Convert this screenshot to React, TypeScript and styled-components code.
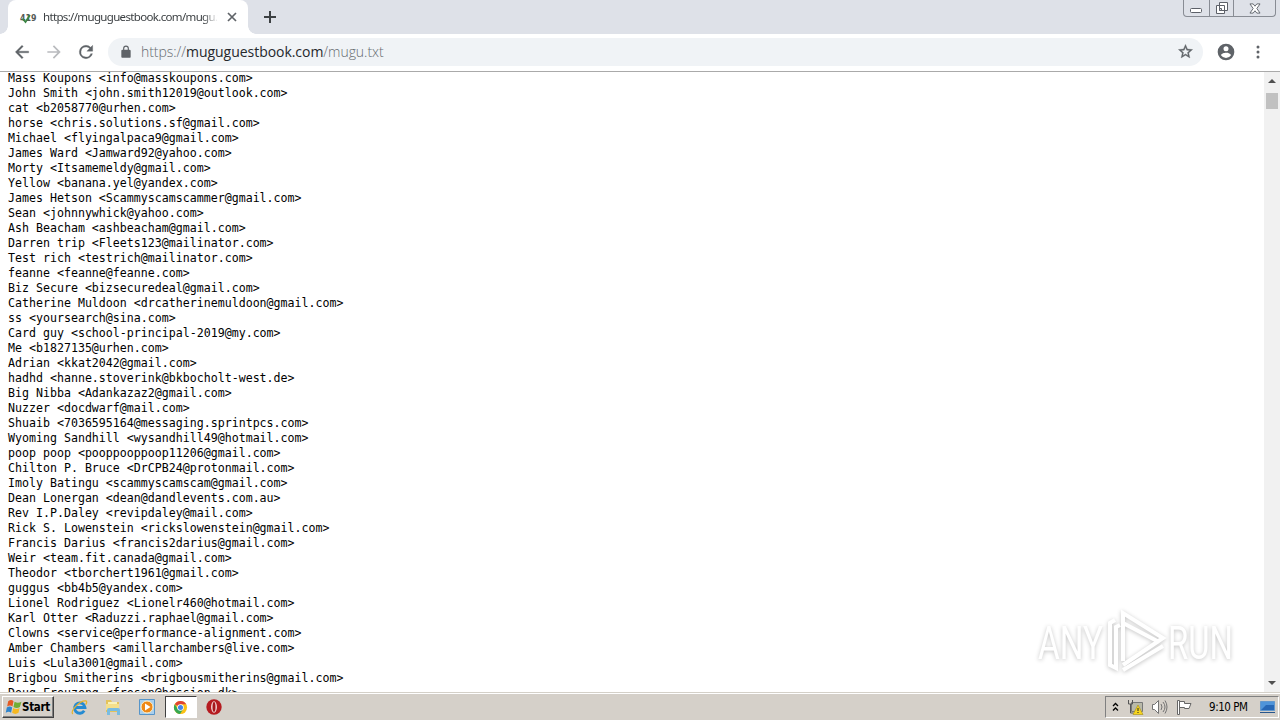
import React from "react";
import styled, { createGlobalStyle } from "styled-components";

const Global = createGlobalStyle`
  * { box-sizing: border-box; }
  html, body { margin: 0; padding: 0; overflow: hidden; background: #fff; }
  svg { display: block; flex: none; overflow: visible; }
`;

const Screen = styled.div`
  position: relative;
  display: flex;
  flex-direction: column;
  width: 1280px;
  height: 720px;
  overflow: hidden;
  background: #fff;
`;

const TabStrip = styled.header`
  display: flex;
  align-items: flex-start;
  height: 34px;
  flex: none;
  background: #dee1e8;
`;

const TabWrap = styled.div`
  display: flex;
  align-items: flex-end;
  height: 34px;
`;

const Tab = styled.div`
  display: flex;
  align-items: center;
  width: 240px;
  height: 34px;
  padding: 0 11px 0 12px;
  border-radius: 8px 8px 0 0;
  background: #fff;
`;

const Flare = styled.div<{ $side: "left" | "right" }>`
  width: 8px;
  height: 8px;
  background: radial-gradient(circle at ${(p) => (p.$side === "left" ? "0 0" : "100% 0")}, #dee1e8 7.5px, #fff 8px);
`;

const TabTitle = styled.span`
  width: 175px;
  margin: 0 auto 0 6px;
  overflow: hidden;
  white-space: nowrap;
  font: 11.5px/16px "Noto Sans", sans-serif;
  letter-spacing: -0.66px;
  color: #3c4043;
  mask-image: linear-gradient(90deg, #000 160px, transparent 175px);
`;

const NewTab = styled.div`
  padding: 11px 0 0 8px;
`;

const WindowButtons = styled.div`
  display: flex;
  width: 93px;
  height: 17px;
  margin: 0 4px 0 auto;
  border: 1px solid #888c94;
  border-top: 0;
  border-radius: 0 0 4px 4px;
`;

const WindowButton = styled.div<{ $w: number }>`
  display: flex;
  align-items: center;
  justify-content: center;
  width: ${(p) => p.$w}px;
  & + & { border-left: 1px solid #888c94; }
`;

const Toolbar = styled.div`
  display: flex;
  align-items: center;
  height: 38px;
  flex: none;
  padding: 0 12px 2px 12px;
  border-bottom: 1px solid #aaaaaa;
  background: #fff;
`;

const NavIcons = styled.div`
  display: flex;
  gap: 12px;
  margin-right: 12px;
`;

const Omnibox = styled.div`
  display: flex;
  align-items: center;
  width: 1095px;
  flex: none;
  height: 28px;
  padding: 0 9px 0 11px;
  border-radius: 14px;
  background: #f0f3f6;
`;

const Address = styled.div`
  flex: 1;
  margin-left: 8px;
  font: 300 14px/20px "Open Sans", "Noto Sans", sans-serif;
  letter-spacing: -0.04px;
  white-space: nowrap;
  color: #666b70;
  b { font-weight: 400; color: #25282c; }
`;

const ToolbarEnd = styled.div`
  display: flex;
  align-items: center;
  gap: 13px;
  margin-left: 13px;
`;

const Page = styled.main`
  display: flex;
  height: 620px;
  flex: none;
  overflow: hidden;
`;

const Listing = styled.pre`
  flex: 1;
  margin: -1px 0 0;
  padding-left: 8px;
  font: 11.61px/15px "DejaVu Sans Mono", monospace;
  color: #000;
`;

const Scrollbar = styled.div`
  display: flex;
  flex-direction: column;
  align-items: center;
  justify-content: space-between;
  width: 16px;
  padding: 7px 0 7px;
  background: #f1f1f1;
`;

const Thumb = styled.div`
  width: 12px;
  height: 16px;
  margin: 10px 0 auto;
  background: #c1c1c1;
`;

const Arrow = styled.div<{ $up?: boolean }>`
  border: 4px solid transparent;
  border-${(p) => (p.$up ? "top" : "bottom")}: 0;
  border-${(p) => (p.$up ? "bottom" : "top")}: 4px solid #505050;
`;

const Taskbar = styled.footer`
  display: flex;
  align-items: center;
  height: 28px;
  flex: none;
  padding: 2px 1px 1px 2px;
  border-top: 1px solid #d4d0c8;
  box-shadow: inset 0 1px #fff;
  background: #d5d0c9;
`;

const StartButton = styled.div`
  display: flex;
  align-items: center;
  gap: 0;
  width: 52px;
  height: 22px;
  padding-left: 2px;
  border: 1px solid;
  border-color: #fff #404040 #404040 #fff;
  box-shadow: inset -1px -1px #808080;
  font: bold 11.5px/16px "DejaVu Sans Condensed", "DejaVu Sans", sans-serif;
  letter-spacing: -0.3px;
  color: #000;
`;

const Launchers = styled.div`
  display: flex;
  margin-left: 9px;
`;

const Launcher = styled.div<{ $active?: boolean }>`
  display: flex;
  align-items: center;
  justify-content: center;
  width: ${(p) => (p.$active ? 32 : 33.5)}px;
  height: 22px;
  ${(p) => p.$active && "margin: 0 1px; background: #fff; border: 1px solid; border-color: #404040 #fff #fff #404040;"}
`;

const Tray = styled.div`
  display: flex;
  align-items: center;
  width: 174px;
  height: 22px;
  margin-left: auto;
  padding-left: 6px;
  border: 1px solid;
  border-color: #808080 #fff #fff #808080;
`;

const TrayIcons = styled.div`
  display: flex;
  align-items: center;
  gap: 8px;
`;

const Clock = styled.span`
  width: 42px;
  margin: 0 9px 0 17px;
  font: 11.5px/14px "DejaVu Sans Condensed", "DejaVu Sans", sans-serif;
  letter-spacing: -0.45px;
  white-space: nowrap;
  color: #000;
`;

const Watermark = styled.div`
  position: absolute;
  left: 1037px;
  top: 605px;
  filter: drop-shadow(0 1px 2px rgba(0, 0, 0, 0.24));
`;

const entries = `Mass Koupons <info@masskoupons.com>
John Smith <john.smith12019@outlook.com>
cat <b2058770@urhen.com>
horse <chris.solutions.sf@gmail.com>
Michael <flyingalpaca9@gmail.com>
James Ward <Jamward92@yahoo.com>
Morty <Itsamemeldy@gmail.com>
Yellow <banana.yel@yandex.com>
James Hetson <Scammyscamscammer@gmail.com>
Sean <johnnywhick@yahoo.com>
Ash Beacham <ashbeacham@gmail.com>
Darren trip <Fleets123@mailinator.com>
Test rich <testrich@mailinator.com>
feanne <feanne@feanne.com>
Biz Secure <bizsecuredeal@gmail.com>
Catherine Muldoon <drcatherinemuldoon@gmail.com>
ss <yoursearch@sina.com>
Card guy <school-principal-2019@my.com>
Me <b1827135@urhen.com>
Adrian <kkat2042@gmail.com>
hadhd <hanne.stoverink@bkbocholt-west.de>
Big Nibba <Adankazaz2@gmail.com>
Nuzzer <docdwarf@mail.com>
Shuaib <7036595164@messaging.sprintpcs.com>
Wyoming Sandhill <wysandhill49@hotmail.com>
poop poop <pooppooppoop11206@gmail.com>
Chilton P. Bruce <DrCPB24@protonmail.com>
Imoly Batingu <scammyscamscam@gmail.com>
Dean Lonergan <dean@dandlevents.com.au>
Rev I.P.Daley <revipdaley@mail.com>
Rick S. Lowenstein <rickslowenstein@gmail.com>
Francis Darius <francis2darius@gmail.com>
Weir <team.fit.canada@gmail.com>
Theodor <tborchert1961@gmail.com>
guggus <bb4b5@yandex.com>
Lionel Rodriguez <Lionelr460@hotmail.com>
Karl Otter <Raduzzi.raphael@gmail.com>
Clowns <service@performance-alignment.com>
Amber Chambers <amillarchambers@live.com>
Luis <Lula3001@gmail.com>
Brigbou Smitherins <brigbousmitherins@gmail.com>
Doug Freuzeng <freson@hession.dk>`;

const Glyph = ({ d, size = 20, fill = "#5f6368", bold = 0 }: { d: string; size?: number; fill?: string; bold?: number }) => (
  <svg width={size} height={size} viewBox="0 0 24 24"><path d={d} fill={fill} stroke={fill} strokeWidth={bold} /></svg>
);

const BACK = "M20 11H7.83l5.59-5.59L12 4l-8 8 8 8 1.41-1.41L7.83 13H20v-2z";
const FORWARD = "M12 4l-1.41 1.41L16.17 11H4v2h12.17l-5.58 5.59L12 20l8-8z";
const RELOAD = "M17.65 6.35A7.96 7.96 0 0 0 12 4a8 8 0 1 0 7.73 10h-2.08A6 6 0 1 1 12 6c1.66 0 3.14.69 4.22 1.78L13 11h7V4l-2.35 2.35z";
const LOCK = "M18 8h-1V6A5 5 0 0 0 7 6v2H6a2 2 0 0 0-2 2v10c0 1.1.9 2 2 2h12a2 2 0 0 0 2-2V10a2 2 0 0 0-2-2zM9 6a3 3 0 0 1 6 0v2H9V6z";
const STAR = "M22 9.24l-7.19-.62L12 2 9.19 8.63 2 9.24l5.46 4.73L5.82 21 12 17.27 18.18 21l-1.63-7.03L22 9.24zM12 15.4l-3.76 2.27 1-4.28-3.32-2.88 4.38-.38L12 6.1l1.71 4.04 4.38.38-3.32 2.88 1 4.28L12 15.4z";
const PERSON = "M12 2a10 10 0 1 0 0 20 10 10 0 0 0 0-20zm0 3a3 3 0 1 1 0 6 3 3 0 0 1 0-6zm0 14.2a7.2 7.2 0 0 1-6-3.22c.03-1.99 4-3.08 6-3.08s5.97 1.09 6 3.08a7.2 7.2 0 0 1-6 3.22z";

const FavIcon = () => (
  <svg width="17" height="16" viewBox="0 0 17 16">
    <text x="0" y="11.5" fontFamily="DejaVu Sans, sans-serif" fontWeight="bold" fontSize="9.5" textLength="16.5" lengthAdjust="spacingAndGlyphs" fill="#555a56">419</text>
    <path d="M2.500 9.500l3 3.500 4.500-7" fill="none" stroke="#3b8544" strokeWidth="1.800" />
  </svg>
);

const StartFlag = () => (
  <svg width="17" height="17" viewBox="0 0 16 16">
    <path d="M3 2q3-2 5 0L7 7Q5 5 2 7z" fill="#e35a24" />
    <path d="M9 2.500q3 2 6.500 0l-1.500 5q-3 2-6 0z" fill="#71ae35" />
    <path d="M1.700 8q3-2 5 0l-1 5q-2-2-5 0z" fill="#2e84cd" />
    <path d="M7.700 8.500q3 2 6 0l-1 4.500q-3 2-6 0z" fill="#f6b821" />
  </svg>
);

const Explorer = () => (
  <svg width="17" height="17" viewBox="0 0 18 18">
    <path d="M14 12.500A5.500 5.500 0 1 1 14.800 9H4.500" fill="none" stroke="#258bd2" strokeWidth="3" />
    <path d="M2 16C-2 13 10 1 16 2q1.500 1-.5 4" fill="none" stroke="#e6b32c" strokeWidth="1.300" />
  </svg>
);

const Folder = () => (
  <svg width="18" height="18" viewBox="0 0 18 18">
    <path d="M2 2h5l1 2h7v10H2z" fill="#e4c35b" />
    <path d="M4 4h9v3H4z" fill="#f9f2b9" />
    <path d="M2 6h13v6H2z" fill="#f4df8b" />
    <path d="M3 17v-5q0-2 2-2h9q2 0 2 2v5h-3v-4H6v4z" fill="#79bce1" />
  </svg>
);

const MediaPlayer = () => (
  <svg width="16" height="16" viewBox="0 0 16 16">
    <path d="M.5.5h15v15H.5z" fill="#a9cfed" stroke="#5795c9" />
    <circle cx="8" cy="8" r="6" fill="#ee8918" stroke="#fff0ca" />
    <path d="M6 4.500v7L11.500 8z" fill="#fff" />
  </svg>
);

const Chrome = () => (
  <svg width="15" height="15" viewBox="0 0 16 16">
    <circle cx="8" cy="8" r="7" fill="#fbc116" />
    <path d="M8 8L1.900 4.500A7 7 0 0 1 14.100 4.500H8z" fill="#df4334" />
    <path d="M1.900 4.500A7 7 0 0 0 7.500 15l3.500-5.500H5z" fill="#35a853" />
    <circle cx="8" cy="8" r="3.500" fill="#fff" /><circle cx="8" cy="8" r="2.700" fill="#4285e8" />
  </svg>
);

const Opera = () => (
  <svg width="16" height="16" viewBox="0 0 16 16">
    <circle cx="8" cy="8" r="7.700" fill="#b51b20" />
    <ellipse cx="8" cy="8" rx="2.900" ry="5.800" fill="#f6dede" />
    <ellipse cx="8" cy="8" rx="1.500" ry="4.900" fill="#a5161b" />
  </svg>
);

const AnyRunMark = () => (
  <svg width="202" height="70" viewBox="0 0 202 70">
    <g fill="#fff" fontFamily="Roboto, sans-serif" fontSize="46">
      <text x="1" y="54" textLength="65" lengthAdjust="spacingAndGlyphs">ANY</text>
      <text x="131" y="54" textLength="65" lengthAdjust="spacingAndGlyphs">RUN</text>
    </g>
    <g fill="none" stroke="#fff" strokeWidth="4">
      <path d="M86 56V8l40 25-40 27" />
      <path d="M78 15l-5 3v42l6 3V22l4-2M86 18l36 19M86 65l40-24" />
    </g>
  </svg>
);

export default function App() {
  return (
    <Screen>
      <Global />
      <TabStrip>
        <TabWrap>
          <Flare $side="left" />
          <Tab>
            <FavIcon />
            <TabTitle>https://muguguestbook.com/mugu.txt</TabTitle>
            <svg width="10" height="10" viewBox="0 0 10 10"><path d="M1 1l8 8M9 1l-8 8" stroke="#5f6368" strokeWidth="1.700" /></svg>
          </Tab>
          <Flare $side="right" />
        </TabWrap>
        <NewTab>
          <svg width="12" height="12" viewBox="0 0 12 12"><path d="M6 0v12M0 6h12" stroke="#3c4043" strokeWidth="2" /></svg>
        </NewTab>
        <WindowButtons>
          <WindowButton $w={25}>
            <svg width="12" height="12" viewBox="0 0 12 12"><rect x=".5" y="6.500" width="11" height="4" rx="1" fill="#fff" stroke="#5c6068" /></svg>
          </WindowButton>
          <WindowButton $w={25}>
            <svg width="14" height="14" viewBox="0 0 14 14"><path d="M4.500 1.500h8v8h-8zM1.500 4.500h8v8h-8z" fill="#fff" stroke="#5c6068" /><path d="M4.500 7.500h2v2h-2z" fill="#dee1e8" stroke="#5c6068" /></svg>
          </WindowButton>
          <WindowButton $w={42}>
            <svg width="12" height="11" viewBox="0 0 13 12"><path d="M1 1h3.500l2 2.500 2-2.500H12L8.500 6l3.500 5H8.500l-2-2.500-2 2.500H1l3.500-5z" fill="#fff" stroke="#5c6068" /></svg>
          </WindowButton>
        </WindowButtons>
      </TabStrip>
      <Toolbar>
        <NavIcons>
          <Glyph d={BACK} bold={0.4} /><Glyph d={FORWARD} fill="#b9bbbe" /><Glyph d={RELOAD} bold={0.4} />
        </NavIcons>
        <Omnibox>
          <Glyph d={LOCK} size={14} />
          <Address>https://<b>muguguestbook.com</b>/mugu.txt</Address>
          <Glyph d={STAR} size={17} bold={0.5} />
        </Omnibox>
        <ToolbarEnd>
          <Glyph d={PERSON} size={20} />
          <svg width="18" height="18" viewBox="0 0 18 18" fill="#5f6368"><circle cx="9" cy="4" r="1.500" /><circle cx="9" cy="9" r="1.500" /><circle cx="9" cy="14" r="1.500" /></svg>
        </ToolbarEnd>
      </Toolbar>
      <Page>
        <Listing>{entries}</Listing>
        <Scrollbar><Arrow $up /><Thumb /><Arrow /></Scrollbar>
      </Page>
      <Taskbar>
        <StartButton><StartFlag />Start</StartButton>
        <Launchers>
          <Launcher><Explorer /></Launcher>
          <Launcher><Folder /></Launcher>
          <Launcher><MediaPlayer /></Launcher>
          <Launcher $active><Chrome /></Launcher>
          <Launcher><Opera /></Launcher>
        </Launchers>
        <Tray>
          <TrayIcons>
            <svg width="7" height="10" viewBox="0 0 7 10"><path d="M1 4l2.500-2.500L6 4M1 8.500L3.500 6 6 8.500" fill="none" stroke="#000" strokeWidth="1.300" /></svg>
            <svg width="16" height="16" viewBox="0 0 16 16"><path d="M4.500 3.500h11v9h-11z" fill="#b9b9a9" stroke="#777" /><path d="M1.500 1v4h4V1M3.500 5v9h3" fill="none" stroke="#555" /><path d="M11 6l5 9.500H6z" fill="#f7d51d" stroke="#a58b13" strokeWidth=".6" /><path d="M11 9v3M11 13v1" stroke="#222" /></svg>
            <svg width="17" height="16" viewBox="0 0 17 16" fill="none" stroke="#737373"><path d="M1.500 5.500h2l4-4v13l-4-4h-2z" fill="#fff" /><path d="M10 5q2 3 0 6M12 3q4 5 0 10M14 1.500q4 6.500 0 13" /></svg>
            <svg width="16" height="16" viewBox="0 0 16 16"><path d="M1.500 1.500h2v14h-2zM3.500 2.500h5v2h6.500l-2 5H8.500v-1h-5z" fill="#fff" stroke="#666" /></svg>
          </TrayIcons>
          <Clock>9:10 PM</Clock>
          <svg width="15" height="14" viewBox="0 0 15 14"><path d="M.5 1.500h14v9H.5z" fill="#2767b5" stroke="#6398cd" /><path d="M1 10l5-5h8V2H1z" fill="#4f94d9" /><path d="M0 12h15v1H0z" fill="#28568c" /></svg>
        </Tray>
      </Taskbar>
      <Watermark><AnyRunMark /></Watermark>
    </Screen>
  );
}
